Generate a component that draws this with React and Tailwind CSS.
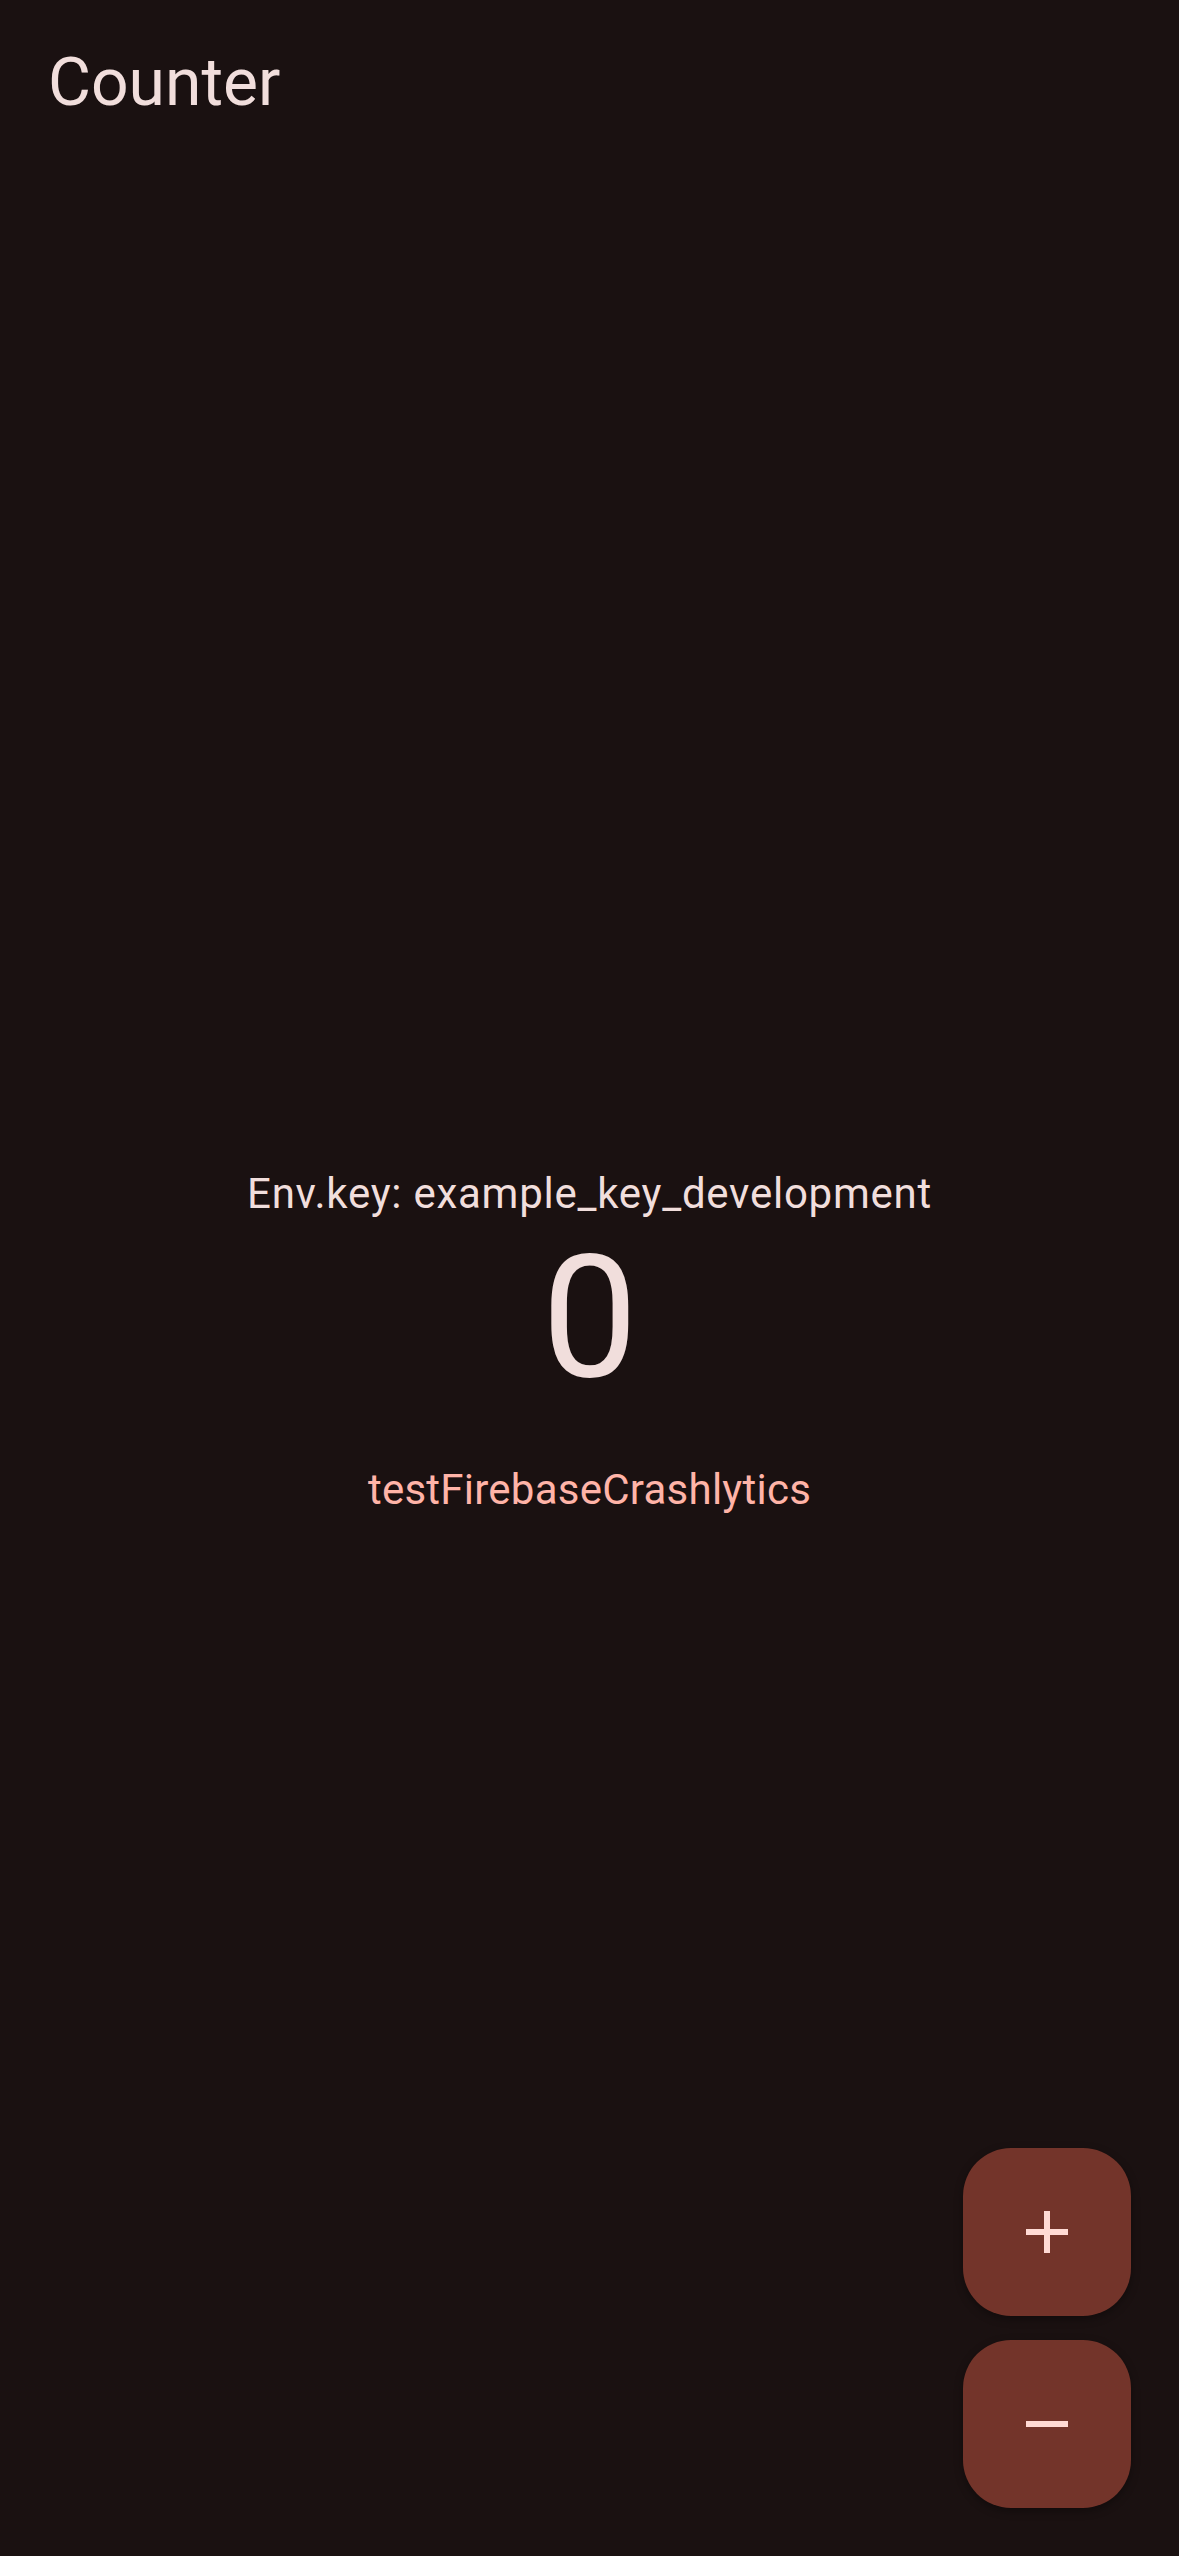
import React, { useState } from "react";

function AddIcon() {
  return (
    <svg className="w-[72px] h-[72px]" viewBox="0 0 24 24" fill="currentColor">
      <path d="M19 13h-6v6h-2v-6H5v-2h6V5h2v6h6v2z" />
    </svg>
  );
}

function RemoveIcon() {
  return (
    <svg className="w-[72px] h-[72px]" viewBox="0 0 24 24" fill="currentColor">
      <path d="M19 13H5v-2h14v2z" />
    </svg>
  );
}

export default function App() {
  const [count, setCount] = useState(0);

  return (
    <div
      className="relative min-h-[2556px] w-full bg-[#1a1111] text-[#f1dedc]"
      style={{ fontFamily: "Roboto, 'Noto Sans', sans-serif" }}
    >
      {/* App bar */}
      <header className="px-[48px] pt-[44px]">
        <h1 className="text-[66px] leading-[77px] font-normal">Counter</h1>
      </header>

      {/* Body */}
      <main className="flex flex-col items-center pt-[1043px]">
        <p className="text-[42px] leading-[60px] tracking-[0.75px]">
          Env.key: example_key_development
        </p>
        <div className="text-[171px] leading-[192px] tracking-[-0.75px] -mt-[2px]">
          {count}
        </div>
        <button className="mt-[46px] px-[36px] text-[42px] leading-[60px] tracking-[0.25px] font-normal text-[#ffb4a8] rounded-full">
          testFirebaseCrashlytics
        </button>
      </main>

      {/* Floating action buttons */}
      <div className="absolute right-[48px] bottom-[48px] flex flex-col gap-[24px]">
        <button
          onClick={() => setCount(count + 1)}
          className="w-[168px] h-[168px] rounded-[48px] bg-[#73342a] text-[#ffdad4] flex items-center justify-center shadow-[0_3px_8px_rgba(0,0,0,0.35)]"
        >
          <AddIcon />
        </button>
        <button
          onClick={() => setCount(count - 1)}
          className="w-[168px] h-[168px] rounded-[48px] bg-[#73342a] text-[#ffdad4] flex items-center justify-center shadow-[0_3px_8px_rgba(0,0,0,0.35)]"
        >
          <RemoveIcon />
        </button>
      </div>
    </div>
  );
}
